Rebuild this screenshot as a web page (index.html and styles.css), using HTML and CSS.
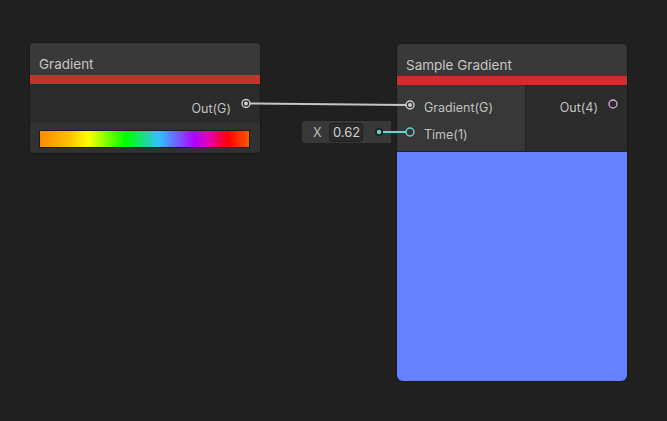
FILE: index.html
```html
<!DOCTYPE html>
<html>
<head>
<meta charset="utf-8">
<link rel="stylesheet" href="styles.css">
</head>
<body>
<div class="canvas">
  <div class="node node-gradient">
    <div class="node-header">Gradient</div>
    <div class="node-accent"></div>
    <div class="node-row out-row"><span class="label">Out(G)</span></div>
    <div class="swatch-area"><div class="swatch"></div></div>
  </div>

  <div class="node node-sample">
    <div class="node-header">Sample Gradient</div>
    <div class="node-accent"></div>
    <div class="ports">
      <div class="inputs">
        <div class="port-row"><span class="label">Gradient(G)</span></div>
        <div class="port-row"><span class="label">Time(1)</span></div>
      </div>
      <div class="outputs">
        <div class="port-row out"><span class="label">Out(4)</span></div>
      </div>
    </div>
    <div class="preview"></div>
  </div>

  <div class="inline-input">
    <span class="axis">X</span>
    <span class="field">0.62</span>
  </div>

  <svg class="wires" width="667" height="421" viewBox="0 0 667 421">
    <line x1="250" y1="103.5" x2="406" y2="105" stroke="#c6c6c6" stroke-width="2"/>
    <line x1="382" y1="132" x2="406" y2="132" stroke="#6ad3d6" stroke-width="2"/>
    <circle cx="246" cy="103.5" r="4" fill="#2b2b2b" stroke="#cfcfcf" stroke-width="1.4"/>
    <circle cx="246" cy="103.5" r="2" fill="#cfcfcf"/>
    <circle cx="410" cy="105" r="4" fill="#383838" stroke="#cfcfcf" stroke-width="1.4"/>
    <circle cx="410" cy="105" r="2" fill="#cfcfcf"/>
    <circle cx="379" cy="132" r="4" fill="#1f1f1f"/>
    <circle cx="379" cy="132" r="2.2" fill="#6ad3d6"/>
    <circle cx="410" cy="132" r="4" fill="#383838" stroke="#6ad3d6" stroke-width="1.5"/>
    <circle cx="613" cy="104" r="4" fill="#2b2b2b" stroke="#d8a8e0" stroke-width="1.3"/>
  </svg>
</div>
</body>
</html>
```

FILE: styles.css
```css
html, body {
  margin: 0;
  padding: 0;
  background: #202020;
}
.canvas {
  position: relative;
  width: 667px;
  height: 421px;
  overflow: hidden;
  background: #202020;
  font-family: Inter, "Noto Sans", sans-serif;
  color: #c2c2c2;
}
.node {
  position: absolute;
  display: flex;
  flex-direction: column;
  background: #2b2b2b;
  border-radius: 4px;
  box-shadow: 0 0 0 1px #191919;
  overflow: hidden;
}
.node-gradient {
  left: 30px;
  top: 43px;
  width: 230px;
  height: 110px;
}
.node-sample {
  left: 397px;
  top: 44px;
  width: 230px;
  height: 337px;
  border-radius: 4px 4px 6px 6px;
}
.node-header {
  height: 32px;
  flex: none;
  background: #393939;
  font-size: 13.5px;
  line-height: 32px;
  padding-left: 9px;
  padding-top: 5px;
  box-sizing: border-box;
  color: #c6c6c6;
}
.node-accent {
  height: 9px;
  flex: none;
  background: #c8322a;
}
.label {
  font-size: 12.5px;
}
.out-row {
  height: 39px;
  flex: none;
  display: flex;
  justify-content: flex-end;
  align-items: flex-start;
  padding: 17px 29px 0 0;
  box-sizing: border-box;
  background: #2b2b2b;
}
.swatch-area {
  flex: 1;
  background: #313131;
  padding: 7px 10px 0 9px;
}
.swatch {
  height: 18px;
  box-sizing: border-box;
  border: 1px solid #1b1b1b;
  background: linear-gradient(to right,
    #ff8a00 0%,
    #ffc000 14%,
    #ffff00 23%,
    #00ff00 41%,
    #30c0ff 57%,
    #b000ff 74%,
    #e000c0 80%,
    #ff0000 90%,
    #ff5a00 100%);
}
.ports {
  display: flex;
  height: 66px;
  flex: none;
  border-bottom: 1px solid #222;
}
.inputs {
  width: 129px;
  background: #383838;
  border-right: 1px solid #242424;
  padding-top: 15px;
  box-sizing: border-box;
}
.outputs {
  flex: 1;
  background: #2b2b2b;
  padding-top: 15px;
  box-sizing: border-box;
}
.port-row {
  height: 27px;
  display: flex;
  align-items: flex-start;
  padding-left: 27px;
}
.port-row.out {
  justify-content: flex-end;
  padding-left: 0;
  padding-right: 29px;
}
.preview {
  flex: 1;
  background: #6581ff;
}
.inline-input {
  position: absolute;
  left: 302px;
  top: 121px;
  width: 89px;
  height: 22px;
  background: #383838;
  border-radius: 3px 0 0 3px;
  display: flex;
  align-items: center;
  box-sizing: border-box;
  padding-left: 11px;
}
.axis {
  font-size: 12.5px;
  width: 16px;
  color: #bdbdbd;
}
.field {
  height: 19px;
  width: 34px;
  box-sizing: border-box;
  background: #2a2a2a;
  border: 1px solid #202020;
  border-radius: 3px;
  font-size: 13px;
  line-height: 17px;
  padding-left: 3px;
  color: #d0d0d0;
}
.wires {
  position: absolute;
  left: 0;
  top: 0;
  pointer-events: none;
}
```
